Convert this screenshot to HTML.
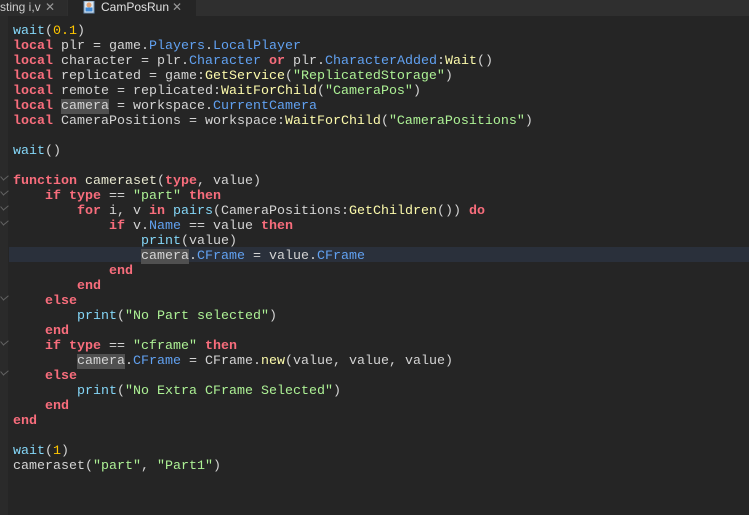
<!DOCTYPE html>
<html><head><meta charset="utf-8"><style>
html,body{margin:0;padding:0;width:749px;height:515px;overflow:hidden;background:#252525;}
#bar{position:absolute;left:0;top:0;width:749px;height:16px;background:#2f2f2f;}
#t1{position:absolute;left:0;top:0;width:67px;height:16px;background:#2c2c2c;color:#ccc;font:12px "Liberation Sans",sans-serif;line-height:15px;}
#t2{position:absolute;left:68px;top:0;width:128px;height:16px;background:#252525;color:#e0e0e0;font:12px "Liberation Sans",sans-serif;line-height:15px;}
#gut{position:absolute;left:0;top:16px;width:8px;height:499px;background:#2a2a2a;}
#hl{position:absolute;left:9px;top:247px;width:740px;height:15px;background:#2a303b;}
#code{position:absolute;left:13px;top:23.5px;margin:0;font:13.33px "Liberation Mono",monospace;line-height:15px;color:#d4d4d4;white-space:pre;}
.k{color:#f86d7c;font-weight:bold}.b{color:#84d6f7}.p{color:#61a1f1}.s{color:#adf195}.n{color:#ffc600}.f{color:#fdfbac}
.c{background:#505050}
.m{position:absolute;left:1px;width:6px;height:4px;border-left:1px solid #888;border-bottom:1px solid #888;transform:rotate(-40deg);opacity:.6}
</style></head><body>
<div id="bar"></div>
<div id="t1"><span style="position:absolute;left:0">sting i,v</span><span style="position:absolute;left:45px;color:#999">✕</span></div>
<div id="t2"><svg style="position:absolute;left:15px;top:1px" width="12" height="13"><rect x="1" y="0" width="10" height="12" fill="#dfe8f0" stroke="#6a8fb5"/><circle cx="6" cy="4" r="2.5" fill="#e0a070"/><rect x="2.5" y="6.5" width="7" height="4" fill="#3e8ad8"/></svg><span style="position:absolute;left:33px">CamPosRun</span><span style="position:absolute;left:104px;color:#999">✕</span></div>
<div id="gut"></div>
<div id="hl"></div>
<div class="m" style="top:174px"></div><div class="m" style="top:189px"></div><div class="m" style="top:204px"></div><div class="m" style="top:219px"></div><div class="m" style="top:294px"></div><div class="m" style="top:339px"></div><div class="m" style="top:369px"></div>
<pre id="code"><span class="b">wait</span>(<span class="n">0.1</span>)
<span class="k">local</span> plr = game.<span class="p">Players</span>.<span class="p">LocalPlayer</span>
<span class="k">local</span> character = plr.<span class="p">Character</span> <span class="k">or</span> plr.<span class="p">CharacterAdded</span>:<span class="f">Wait</span>()
<span class="k">local</span> replicated = game:<span class="f">GetService</span>(<span class="s">"ReplicatedStorage"</span>)
<span class="k">local</span> remote = replicated:<span class="f">WaitForChild</span>(<span class="s">"CameraPos"</span>)
<span class="k">local</span> <span class="c">camera</span> = workspace.<span class="p">CurrentCamera</span>
<span class="k">local</span> CameraPositions = workspace:<span class="f">WaitForChild</span>(<span class="s">"CameraPositions"</span>)

<span class="b">wait</span>()

<span class="k">function</span> <span style="color:#e8e8d0">cameraset</span>(<span class="k">type</span>, value)
    <span class="k">if</span> <span class="k">type</span> == <span class="s">"part"</span> <span class="k">then</span>
        <span class="k">for</span> i, v <span class="k">in</span> <span class="b">pairs</span>(CameraPositions:<span class="f">GetChildren</span>()) <span class="k">do</span>
            <span class="k">if</span> v.<span class="p">Name</span> == value <span class="k">then</span>
                <span class="b">print</span>(value)
                <span class="c">camera</span>.<span class="p">CFrame</span> = value.<span class="p">CFrame</span>
            <span class="k">end</span>
        <span class="k">end</span>
    <span class="k">else</span>
        <span class="b">print</span>(<span class="s">"No Part selected"</span>)
    <span class="k">end</span>
    <span class="k">if</span> <span class="k">type</span> == <span class="s">"cframe"</span> <span class="k">then</span>
        <span class="c">camera</span>.<span class="p">CFrame</span> = CFrame.<span class="f">new</span>(value, value, value)
    <span class="k">else</span>
        <span class="b">print</span>(<span class="s">"No Extra CFrame Selected"</span>)
    <span class="k">end</span>
<span class="k">end</span>

<span class="b">wait</span>(<span class="n">1</span>)
cameraset(<span class="s">"part"</span>, <span class="s">"Part1"</span>)</pre>
</body></html>
